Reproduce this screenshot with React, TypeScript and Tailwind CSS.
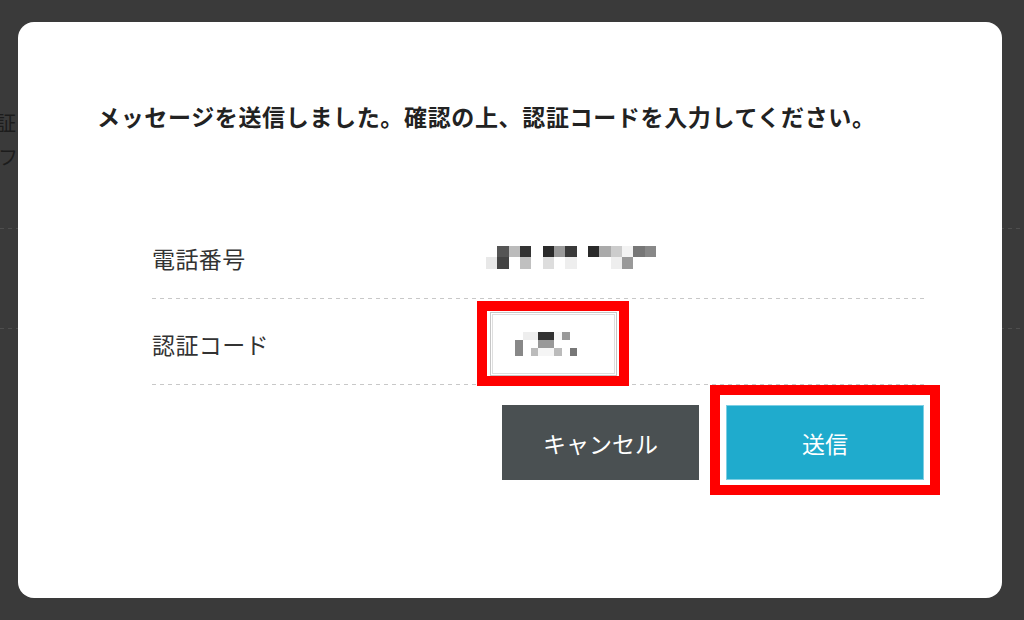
import React from "react";

const phoneCells: [number, number, string][] = [
  [1, 0, "#555555"], [2, 0, "#bbbbbb"], [3, 0, "#333333"],
  [5, 0, "#2a2a2a"], [6, 0, "#999999"], [7, 0, "#3a3a3a"],
  [9, 0, "#2a2a2a"], [10, 0, "#aaaaaa"], [11, 0, "#cccccc"], [12, 0, "#f3f3f3"], [13, 0, "#777777"], [14, 0, "#888888"],
  [0, 1, "#e8e8e8"], [1, 1, "#444444"], [3, 1, "#c0c0c0"], [5, 1, "#dddddd"], [7, 1, "#eeeeee"], [11, 1, "#eeeeee"], [12, 1, "#999999"],
];

const codeCells: [number, number, string][] = [
  [1, 0, "#eeeeee"], [2, 0, "#eeeeee"], [3, 0, "#333333"], [4, 0, "#333333"], [5, 0, "#f8f8f8"], [6, 0, "#999999"],
  [0, 1, "#888888"], [3, 1, "#999999"], [4, 1, "#999999"],
  [0, 2, "#888888"], [2, 2, "#bbbbbb"], [3, 2, "#f5f5f5"], [4, 2, "#f5f5f5"], [5, 2, "#bbbbbb"], [7, 2, "#777777"],
];

function Mosaic({ cells, cw, ch, cols, rows }: { cells: [number, number, string][]; cw: number; ch: number; cols: number; rows: number }) {
  return (
    <svg width={cols * cw} height={rows * ch} viewBox={`0 0 ${cols * cw} ${rows * ch}`} shapeRendering="crispEdges">
      {cells.map(([c, r, f], i) => (
        <rect key={i} x={c * cw} y={r * ch} width={cw} height={ch} fill={f} />
      ))}
    </svg>
  );
}

const font = { fontFamily: '"Noto Sans CJK JP", "Noto Sans", sans-serif' };

export default function App() {
  return (
    <div className="relative h-[620px] w-[1024px] overflow-hidden bg-[#3a3a3a] pl-[18px] pt-[22px]" style={font}>
      {/* background page (dimmed) */}
      <div className="absolute left-[-24px] top-[109px] text-[20px] leading-[28px] text-[#1c1c1c] whitespace-nowrap">認証</div>
      <div className="absolute left-[-2px] top-[143px] text-[20px] leading-[28px] text-[#1c1c1c] whitespace-nowrap">フォ</div>
      <div className="absolute left-0 right-0 top-[228px] h-px bg-[linear-gradient(to_right,#4e4e4e_50%,transparent_50%)] bg-[length:8px_1px]" />
      <div className="absolute left-0 right-0 top-[328px] h-px bg-[linear-gradient(to_right,#4e4e4e_50%,transparent_50%)] bg-[length:8px_1px]" />

      {/* modal */}
      <div className="relative h-[576px] w-[984px] rounded-[16px] bg-white pl-[79px] pr-[78px] pt-[78px]">
        <h2 className="text-[23px] font-bold leading-[32px] tracking-[0.65px] text-[#222] whitespace-nowrap">
          メッセージを送信しました。確認の上、認証コードを入力してください。
        </h2>

        <div className="ml-[55px] mt-[81px] w-[772px]">
          <div className="flex h-[85px] items-center pt-[4px]">
            <div className="w-[334px] text-[23px] leading-[32px] tracking-[0.4px] text-[#333]">電話番号</div>
            <Mosaic cells={phoneCells} cw={11.33} ch={11.5} cols={15} rows={2} />
          </div>
          <div className="h-px bg-[linear-gradient(to_right,#c8c8c8_50%,transparent_50%)] bg-[length:8px_1px]" />
          <div className="flex h-[85px] items-center pt-[4px]">
            <div className="w-[334px] text-[23px] leading-[32px] tracking-[0.4px] text-[#333]">認証コード</div>
            <div className="relative ml-[4px]">
              <div className="flex h-[64px] w-[127px] items-center border border-[#c6c6c6] pl-[24px] shadow-[inset_0_0_0_1px_#fff,inset_0_0_0_2px_#dedede]">
                <Mosaic cells={codeCells} cw={7.8} ch={8} cols={8} rows={3} />
              </div>
              <div className="pointer-events-none absolute left-[-13px] top-[-11px] right-[-12px] bottom-[-10px] border-[10px] border-[#ff0000]" />
            </div>
          </div>
          <div className="h-px bg-[linear-gradient(to_right,#c8c8c8_50%,transparent_50%)] bg-[length:8px_1px]" />

          <div className="mt-[20px] flex justify-end gap-[27px]">
            <button className="flex h-[75px] w-[197px] items-center justify-center bg-[#4a5052] text-[23px] leading-[32px] text-white">
              キャンセル
            </button>
            <div className="relative">
              <button className="flex h-[75px] w-[198px] items-center justify-center border border-[#7ccfe4] bg-[#1fabcd] text-[23px] leading-[32px] text-white">
                送信
              </button>
              <div className="pointer-events-none absolute left-[-16px] top-[-20px] right-[-16px] bottom-[-15px] border-[10px] border-[#ff0000]" />
            </div>
          </div>
        </div>
      </div>
    </div>
  );
}
